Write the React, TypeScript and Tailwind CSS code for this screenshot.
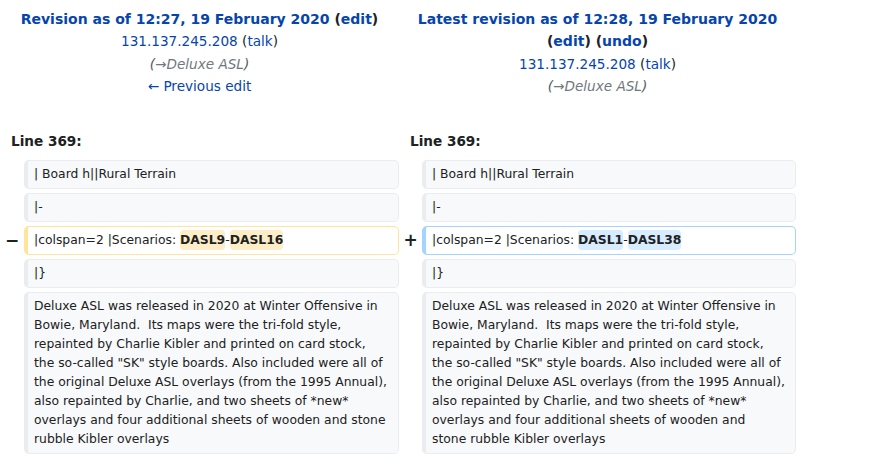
import React from 'react';

const link = 'text-[#0645ad]';

function Hl({ side, children }: { side: 'del' | 'add'; children: React.ReactNode }) {
  return (
    <span className={`rounded-[4px] py-[3px] font-bold ${side === 'del' ? 'bg-[#feeec8]' : 'bg-[#d8ecff]'}`}>{children}</span>
  );
}

function Cell({ kind, children }: { kind: 'ctx' | 'del' | 'add'; children: React.ReactNode }) {
  const border =
    kind === 'ctx' ? 'border-[#eaecf0] bg-[#f8f9fa]' : kind === 'del' ? 'border-[#ffe49c] bg-white' : 'border-[#a3d3ff] bg-white';
  return (
    <div className={`rounded-[5px] border border-l-4 py-[4px] pl-[6px] pr-[2px] text-[12.35px] leading-[19px] ${border}`}>
      {children}
    </div>
  );
}

// wrapped the way the original page wraps it
const paraOld = [
  'Deluxe ASL was released in 2020 at Winter Offensive in',
  'Bowie, Maryland.\u00a0 Its maps were the tri-fold style,',
  'repainted by Charlie Kibler and printed on card stock,',
  'the so-called "SK" style boards. Also included were all of',
  'the original Deluxe ASL overlays (from the 1995 Annual),',
  'also repainted by Charlie, and two sheets of *new*',
  'overlays and four additional sheets of wooden and stone',
  'rubble Kibler overlays',
];
const paraNew = [...paraOld.slice(0, 6), 'overlays and four additional sheets of wooden and', 'stone rubble Kibler overlays'];

function Para({ lines }: { lines: string[] }) {
  return (
    <>
      {lines.map((l, i) => (
        <div key={i} className="whitespace-nowrap">
          {l}
        </div>
      ))}
    </>
  );
}

function Marker({ sign }: { sign?: string }) {
  return <div className="flex items-center justify-center text-[17px] font-bold leading-none">{sign}</div>;
}

export default function App() {
  return (
    <div className="min-h-[458px] bg-white font-['DejaVu_Sans',sans-serif] text-[#202122]">
      <div className="grid w-[796px] grid-cols-[24px_375px_23px_374px] gap-y-[4px] pt-[8px]">
        <div className="col-span-2 text-center text-[13.6px] leading-[22.3px]">
          <div className="text-[14px] font-bold">
            <span className={link}>Revision as of 12:27, 19 February 2020</span> (<span className={link}>edit</span>)
          </div>
          <div>
            <span className={link}>131.137.245.208</span> (<span className={link}>talk</span>)
          </div>
          <div className="italic text-[#54595d]">
            (<span className="text-[#72777d]">→Deluxe ASL</span>)
          </div>
          <div className={link}>← Previous edit</div>
        </div>
        <div className="col-span-2 text-center text-[13.6px] leading-[22.3px]">
          <div className="text-[14px] font-bold">
            <span className={link}>Latest revision as of 12:28, 19 February 2020</span> (<span className={link}>edit</span>){' '}
            (<span className={link}>undo</span>)
          </div>
          <div>
            <span className={link}>131.137.245.208</span> (<span className={link}>talk</span>)
          </div>
          <div className="italic text-[#54595d]">
            (<span className="text-[#72777d]">→Deluxe ASL</span>)
          </div>
        </div>

        <div className="col-span-2 mt-[30px] mb-[5px] pl-[11px] text-[13.6px] font-bold leading-[20px]">Line 369:</div>
        <div className="col-span-2 mt-[30px] mb-[5px] pl-[11px] text-[13.6px] font-bold leading-[20px]">Line 369:</div>

        <Marker />
        <Cell kind="ctx">| Board h||Rural Terrain</Cell>
        <Marker />
        <Cell kind="ctx">| Board h||Rural Terrain</Cell>

        <Marker />
        <Cell kind="ctx">|-</Cell>
        <Marker />
        <Cell kind="ctx">|-</Cell>

        <Marker sign="−" />
        <Cell kind="del">
          |colspan=2 |Scenarios: <Hl side="del">DASL9</Hl>-<Hl side="del">DASL16</Hl>
        </Cell>
        <Marker sign="+" />
        <Cell kind="add">
          |colspan=2 |Scenarios: <Hl side="add">DASL1</Hl>-<Hl side="add">DASL38</Hl>
        </Cell>

        <Marker />
        <Cell kind="ctx">|{'}'}</Cell>
        <Marker />
        <Cell kind="ctx">|{'}'}</Cell>

        <Marker />
        <Cell kind="ctx">
          <Para lines={paraOld} />
        </Cell>
        <Marker />
        <Cell kind="ctx">
          <Para lines={paraNew} />
        </Cell>
      </div>
    </div>
  );
}
